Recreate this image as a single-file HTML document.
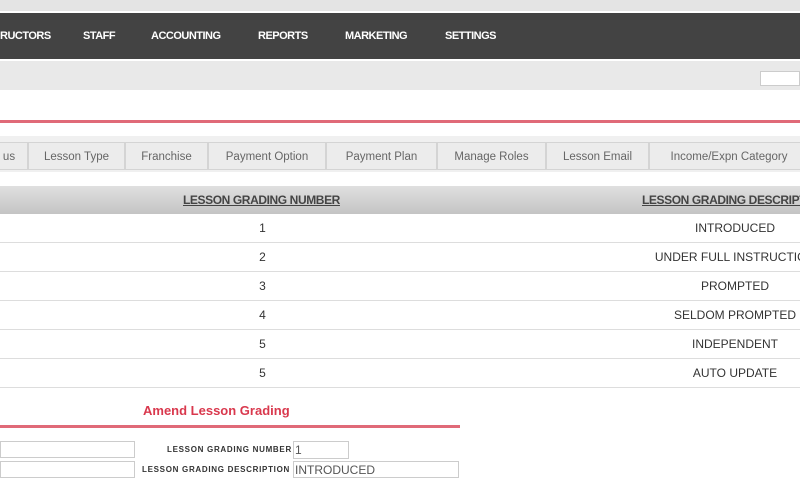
<!DOCTYPE html>
<html><head><style>
body{margin:0;width:800px;height:480px;overflow:hidden;background:#fff;font-family:"Liberation Sans",sans-serif;position:relative}
.a{position:absolute}
.nav span{position:absolute;top:30px;color:#fff;font-size:11px;font-weight:bold;letter-spacing:-0.5px}
.tab{position:absolute;top:142px;height:28px;border:1px solid #d4d4d4;background:#ececec;color:#666;font-size:11.5px;line-height:28px;text-align:center;box-sizing:border-box}
.row{position:absolute;left:0;width:800px;height:29px;border-bottom:1px solid #ddd;box-sizing:border-box;font-size:12px;color:#333;line-height:29px}
.row .n{position:absolute;left:230px;width:65px;text-align:center}
.row .d{position:absolute;left:620px;width:230px;text-align:center}
.lbl{position:absolute;font-size:8px;font-weight:bold;color:#333;letter-spacing:0.7px}
.inp{position:absolute;border:1px solid #ccc;background:#fff;box-sizing:border-box;font-size:12px;color:#555;line-height:16px;padding-left:1px}
</style></head><body>
<div class="a" style="left:0;top:0;width:800px;height:11px;background:#e4e4e4"></div>
<div class="a nav" style="left:0;top:13px;width:800px;height:46px;background:#434343">
<span style="left:0;top:17px">RUCTORS</span><span style="left:83px;top:17px">STAFF</span><span style="left:151px;top:17px">ACCOUNTING</span><span style="left:258px;top:17px">REPORTS</span><span style="left:345px;top:17px">MARKETING</span><span style="left:445px;top:17px">SETTINGS</span></div>
<div class="a" style="left:0;top:61px;width:800px;height:29px;background:#e9e9e9"></div>
<div class="a" style="left:760px;top:71px;width:40px;height:15px;background:#fff;border:1px solid #ccc;box-sizing:border-box"></div>
<div class="a" style="left:0;top:120px;width:800px;height:3px;background:#e06a78"></div>
<div class="a" style="left:0;top:136px;width:800px;height:36px;background:#f0f0f0"></div>
<div class="tab" style="left:-10px;width:38px">us</div>
<div class="tab" style="left:28px;width:97px">Lesson Type</div>
<div class="tab" style="left:125px;width:83px">Franchise</div>
<div class="tab" style="left:208px;width:118px">Payment Option</div>
<div class="tab" style="left:326px;width:111px">Payment Plan</div>
<div class="tab" style="left:437px;width:109px">Manage Roles</div>
<div class="tab" style="left:546px;width:103px">Lesson Email</div>
<div class="tab" style="left:649px;width:160px">Income/Expn Category</div>
<div class="a" style="left:0;top:186px;width:800px;height:28px;background:linear-gradient(#e0e0e0,#c4c4c4);font-size:12px;font-weight:bold;color:#444;line-height:28px">
<span class="a" style="left:183px;text-decoration:underline;letter-spacing:-0.4px">LESSON GRADING NUMBER</span>
<span class="a" style="left:642px;text-decoration:underline;letter-spacing:-0.4px;white-space:nowrap">LESSON GRADING DESCRIPTION</span></div>
<div class="row" style="top:214px"><span class="n">1</span><span class="d">INTRODUCED</span></div>
<div class="row" style="top:243px"><span class="n">2</span><span class="d">UNDER FULL INSTRUCTION</span></div>
<div class="row" style="top:272px"><span class="n">3</span><span class="d">PROMPTED</span></div>
<div class="row" style="top:301px"><span class="n">4</span><span class="d">SELDOM PROMPTED</span></div>
<div class="row" style="top:330px"><span class="n">5</span><span class="d">INDEPENDENT</span></div>
<div class="row" style="top:359px"><span class="n">5</span><span class="d">AUTO UPDATE</span></div>
<div class="a" style="left:143px;top:403px;font-size:13px;font-weight:bold;color:#d9384d">Amend Lesson Grading</div>
<div class="a" style="left:0;top:425px;width:460px;height:3px;background:#e06a78"></div>
<div class="inp" style="left:0;top:441px;width:135px;height:17px"></div>
<div class="inp" style="left:0;top:461px;width:135px;height:17px"></div>
<div class="lbl" style="left:167px;top:445px">LESSON GRADING NUMBER</div>
<div class="lbl" style="left:142px;top:465px">LESSON GRADING DESCRIPTION</div>
<div class="inp" style="left:293px;top:441px;width:56px;height:18px">1</div>
<div class="inp" style="left:293px;top:461px;width:166px;height:17px">INTRODUCED</div>
</body></html>
